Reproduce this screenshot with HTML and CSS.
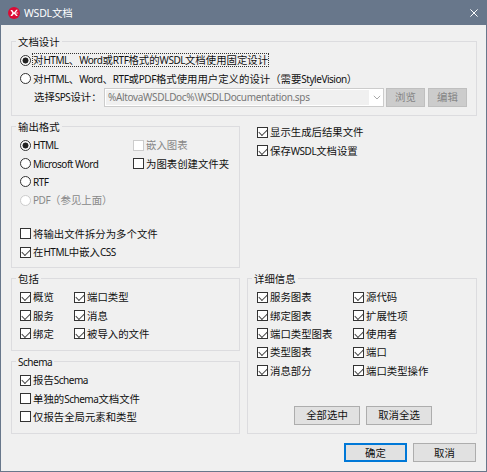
FILE: index.html
```html
<!DOCTYPE html>
<html lang="zh-CN">
<head>
<meta charset="utf-8">
<title>WSDL文档</title>
<link rel="stylesheet" href="styles.css">
</head>
<body>
<div class="dialog">
  <header class="titlebar">
    <svg class="logo" viewBox="0 0 12 12"><circle cx="6" cy="6" r="6" fill="#dc0b35"/><path d="M2.4 3h1.8L6 5.4 8.2 2.8h1.6L7.4 6l2.4 3H8.2L6 6.8 4.2 9H2.4l2-3z" fill="#fff"/><path d="M7.6 6h2.6" stroke="#fff" stroke-width=".7"/></svg>
    <h1><span class="en">WSDL</span>文档</h1>
    <svg class="close" viewBox="0 0 8 8"><path d="M.4.4l7.2 7.2M7.6.4.4 7.6" stroke="#fff" stroke-width="1"/></svg>
  </header>
  <main>
    <section class="group design">
      <h2>文档设计</h2>
      <div class="row"><i class="radio on"></i><span class="focus">对<span class="en">HTML</span>、<span class="en">Word</span>或<span class="en">RTF</span>格式的<span class="en">WSDL</span>文档使用固定设计</span></div>
      <div class="row"><i class="radio"></i><span>对<span class="en">HTML</span>、<span class="en">Word</span>、<span class="en">RTF</span>或<span class="en">PDF</span>格式使用用户定义的设计（需要<span class="en">StyleVision</span>）</span></div>
      <div class="file-row">
        <span class="file-label">选择<span class="en">SPS</span>设计：</span>
        <div class="combo"><span class="value en">%AltovaWSDLDoc%\WSDLDocumentation.sps</span><svg viewBox="0 0 8 5"><path d="M.8.8 4 4 7.2.8" fill="none" stroke="#aaa" stroke-width="1"/></svg></div>
        <div class="btn disabled">浏览</div>
        <div class="btn disabled">编辑</div>
      </div>
    </section>
    <div class="columns upper">
      <section class="group output">
        <h2>输出格式</h2>
        <div class="split formats">
          <div>
            <div class="row"><i class="radio on"></i><span class="en">HTML</span></div>
            <div class="row"><i class="radio"></i><span class="en">Microsoft Word</span></div>
            <div class="row"><i class="radio"></i><span class="en">RTF</span></div>
            <div class="row off"><i class="radio"></i><span><span class="en">PDF</span>（参见上面）</span></div>
          </div>
          <div>
            <div class="row off"><i class="check"></i><span>嵌入图表</span></div>
            <div class="row"><i class="check"></i><span>为图表创建文件夹</span></div>
          </div>
        </div>
        <div class="extra">
          <div class="row"><i class="check"></i><span>将输出文件拆分为多个文件</span></div>
          <div class="row"><i class="check on"></i><span>在<span class="en">HTML</span>中嵌入<span class="en">CSS</span></span></div>
        </div>
      </section>
      <div class="options">
        <div class="row"><i class="check on"></i><span>显示生成后结果文件</span></div>
        <div class="row"><i class="check on"></i><span>保存<span class="en">WSDL</span>文档设置</span></div>
      </div>
    </div>
    <div class="columns lower">
      <div class="stack">
        <section class="group">
          <h2>包括</h2>
          <div class="split include">
            <div>
              <div class="row"><i class="check on"></i><span>概览</span></div>
              <div class="row"><i class="check on"></i><span>服务</span></div>
              <div class="row"><i class="check on"></i><span>绑定</span></div>
            </div>
            <div>
              <div class="row"><i class="check on"></i><span>端口类型</span></div>
              <div class="row"><i class="check on"></i><span>消息</span></div>
              <div class="row"><i class="check on"></i><span>被导入的文件</span></div>
            </div>
          </div>
        </section>
        <section class="group">
          <h2><span class="en">Schema</span></h2>
          <div class="row"><i class="check on"></i><span>报告<span class="en">Schema</span></span></div>
          <div class="row"><i class="check"></i><span>单独的<span class="en">Schema</span>文档文件</span></div>
          <div class="row"><i class="check"></i><span>仅报告全局元素和类型</span></div>
        </section>
      </div>
      <section class="group details">
        <h2>详细信息</h2>
        <div class="split detail-list">
          <div>
            <div class="row"><i class="check on"></i><span>服务图表</span></div>
            <div class="row"><i class="check on"></i><span>绑定图表</span></div>
            <div class="row"><i class="check on"></i><span>端口类型图表</span></div>
            <div class="row"><i class="check on"></i><span>类型图表</span></div>
            <div class="row"><i class="check on"></i><span>消息部分</span></div>
          </div>
          <div>
            <div class="row"><i class="check on"></i><span>源代码</span></div>
            <div class="row"><i class="check on"></i><span>扩展性项</span></div>
            <div class="row"><i class="check on"></i><span>使用者</span></div>
            <div class="row"><i class="check on"></i><span>端口</span></div>
            <div class="row"><i class="check on"></i><span>端口类型操作</span></div>
          </div>
        </div>
        <div class="select-buttons"><div class="btn">全部选中</div><div class="btn">取消全选</div></div>
      </section>
    </div>
    <footer><div class="btn primary">确定</div><div class="btn">取消</div></footer>
  </main>
</div>
</body>
</html>
```
FILE: styles.css
```css
* { box-sizing: border-box; }
body { margin: 0; }
.dialog {
  width: 487px;
  height: 472px;
  border: 1px solid #68778b;
  border-top: 0;
  background: #f0f0f0;
  color: #111;
  font: 10.4px/14px "Noto Sans CJK SC", sans-serif;
  white-space: nowrap;
  overflow: hidden;
}
.en { font-family: "Noto Sans", sans-serif; font-size: 10px; letter-spacing: -0.48px; }
h1, h2 { margin: 0; font-size: inherit; font-weight: 400; }
.titlebar {
  display: flex;
  align-items: center;
  height: 25px;
  margin: 0 -1px;
  padding: 0 9px 0 8px;
  background: #68778b;
  color: #fff;
}
.titlebar .en { font-size: 10.5px; letter-spacing: -0.2px; }
.logo { width: 12px; height: 12px; }
.titlebar h1 { margin-left: 4px; flex: 1; }
.close { width: 8px; height: 8px; }
main { padding: 16px 9px 0 10px; }
.group {
  border: 1px solid #dcdcdf;
  padding: 0 0 0 8px;
}
.group h2 {
  width: fit-content;
  height: 14px;
  margin: -7px 0 2px -4px;
  padding: 0 2px;
  background: #f0f0f0;
}
.design { height: 75px; margin-bottom: 10px; }
.row { display: flex; align-items: center; height: 18.4px; gap: 2px; }
.radio, .check {
  flex: none;
  width: 11px;
  height: 11px;
  border: 1px solid #333;
  background: #fff;
}
.radio { border-radius: 50%; }
.radio.on { background: radial-gradient(circle, #222 2.7px, #fff 3.3px); }
.check.on::before {
  content: "";
  display: block;
  width: 7px;
  height: 4px;
  margin: 1.5px 0 0 1px;
  border: solid #444;
  border-width: 0 0 1px 1px;
  transform: rotate(-45deg);
}
.off { color: #888; }
.off i { border-color: #ccc; }
.focus { outline: 1px dotted #333; line-height: 12px; }
.file-row { display: flex; align-items: center; height: 19px; margin-left: 14px; }
.file-label { width: 70px; }
.combo {
  display: flex;
  align-items: center;
  width: 280px;
  height: 19px;
  margin-right: 2px;
  border: 1px solid #ccc;
  background: #fff;
  color: #777;
}
.value { width: 263px; height: 15px; margin-left: 1px; padding-left: 2px; background: #f0f0f0; letter-spacing: -0.33px; }
.combo svg { width: 8px; height: 5px; margin-left: 4px; }
.btn {
  display: flex;
  align-items: center;
  justify-content: center;
  height: 19px;
  border: 1px solid #adadad;
  background: #e1e1e1;
}
.btn.disabled { width: 39px; border-color: #bfbfbf; background: #ccc; color: #858585; }
.btn.disabled + .disabled { margin-left: 3px; }
.columns { display: grid; grid-template-columns: 229px 230px; column-gap: 7px; }
.upper { margin-bottom: 10px; }
.output { height: 142px; }
.split { display: grid; }
.formats { grid-template-columns: 113px 1fr; }
.extra { margin-top: 15px; }
.options { padding: 0 0 0 10px; margin-top: -3px; }
.stack { display: grid; grid-template-rows: 73px 73px; row-gap: 10px; }
.include { grid-template-columns: 54px 1fr; }
.details { height: 156px; padding-left: 9px; }
.detail-list { grid-template-columns: 96px 1fr; }
.details h2 { margin-left: -5px; }
.select-buttons { display: flex; gap: 6px; margin: 26px 0 0 37px; }
.select-buttons .btn { width: 66px; }
footer { display: flex; justify-content: flex-end; gap: 6px; margin: 9px 1px 0 0; }
footer .btn { width: 63px; }
.primary { border: 2px solid #0078d7; }
```
